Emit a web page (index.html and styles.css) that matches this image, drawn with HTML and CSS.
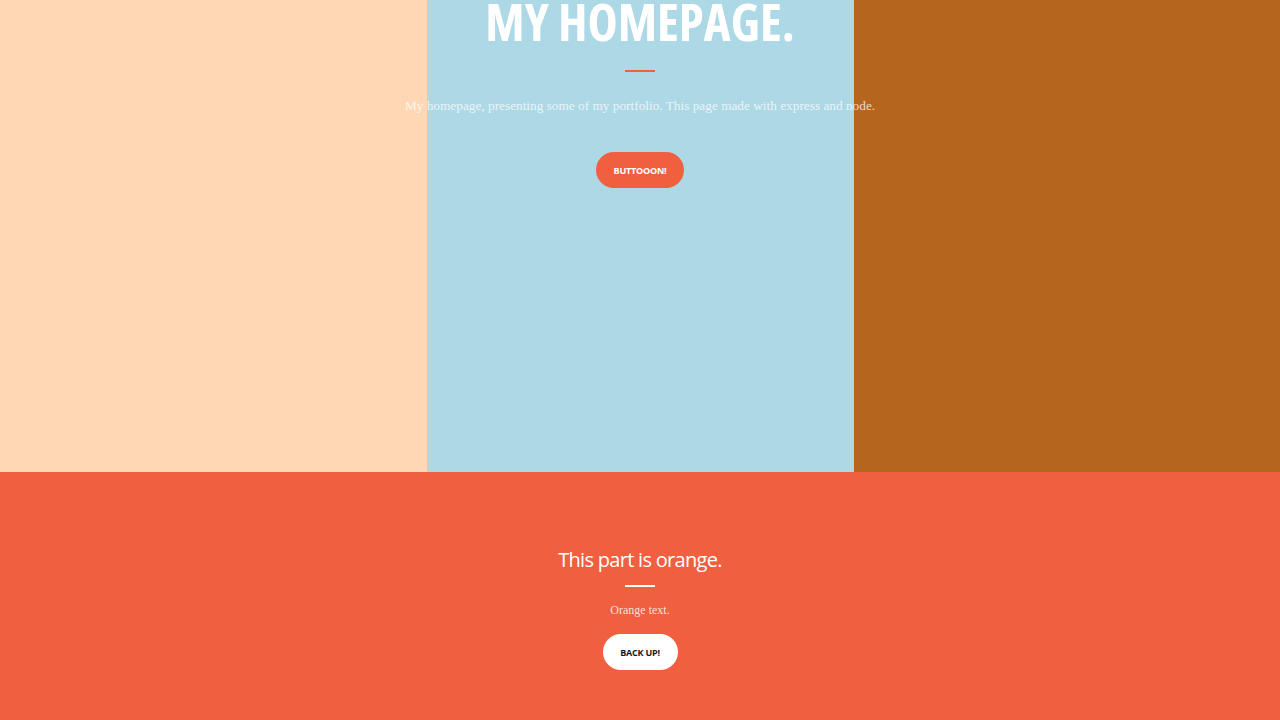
FILE: index.html
```html
<!DOCTYPE html>
<html>
<head>
<meta charset="utf-8">
<link rel="stylesheet" href="styles.css">
</head>
<body>
<header class="hero">
  <div class="cols">
    <div class="col col-peach"></div>
    <div class="col col-blue"></div>
    <div class="col col-brown"></div>
  </div>
  <div class="hero-content">
    <h1 class="hero-title">MY HOMEPAGE.</h1>
    <hr class="rule rule-orange">
    <p class="hero-text">My homepage, presenting some of my portfolio. This page made with express and node.</p>
    <a class="btn btn-orange" href="#orange">BUTTOOON!</a>
  </div>
</header>
<section class="orange" id="orange">
  <h2 class="orange-title">This part is orange.</h2>
  <hr class="rule rule-white">
  <p class="orange-text">Orange text.</p>
  <a class="btn btn-white" href="#">BACK UP!</a>
</section>
</body>
</html>
```
FILE: styles.css
```css
html, body {
  margin: 0;
  padding: 0;
}
body {
  font-family: "Open Sans", "Liberation Sans", sans-serif;
  overflow: hidden;
}
.hero {
  display: grid;
  height: 472px;
}
.cols, .hero-content {
  grid-area: 1 / 1;
}
.cols {
  display: grid;
  grid-template-columns: 427px 427px 1fr;
}
.col-peach { background: #fed7b4; }
.col-blue { background: #add8e6; }
.col-brown { background: #b5651d; }
.hero-content {
  display: flex;
  flex-direction: column;
  align-items: center;
  text-align: center;
}
.hero-title {
  margin: -14px 0 0;
  font-size: 51px;
  font-weight: 700;
  font-stretch: 75%;
  line-height: 70px;
  color: #fff;
}
.rule {
  width: 30px;
  border: 0;
  height: 2px;
  margin: 0;
}
.rule-orange {
  background: #f05f40;
  margin-top: 14px;
}
.rule-white {
  background: #fff;
  margin-top: 12px;
}
.hero-text {
  margin: 26px 0 0;
  font-family: "Liberation Serif", serif;
  font-size: 13.3px;
  color: rgba(255, 255, 255, 0.75);
}
.btn {
  display: inline-flex;
  align-items: center;
  justify-content: center;
  border-radius: 18px;
  height: 36px;
  font-size: 9px;
  font-weight: 700;
  letter-spacing: -0.2px;
  text-decoration: none;
  font-family: "Open Sans", sans-serif;
}
.btn-orange {
  margin-top: 38px;
  width: 88px;
  background: #f05f40;
  color: #fff;
}
.orange {
  background: #f05f40;
  height: 248px;
  display: flex;
  flex-direction: column;
  align-items: center;
  text-align: center;
  padding-top: 75px;
  box-sizing: border-box;
}
.orange-title {
  margin: 0;
  font-size: 20px;
  font-weight: 400;
  letter-spacing: -0.7px;
  line-height: 26px;
  color: #fff;
}
.orange-text {
  margin: 16px 0 0;
  font-family: "Liberation Serif", serif;
  font-size: 12px;
  color: rgba(255, 255, 255, 0.8);
}
.btn-white {
  margin-top: 16px;
  width: 75px;
  background: #fff;
  color: #1a1a1a;
}
```
